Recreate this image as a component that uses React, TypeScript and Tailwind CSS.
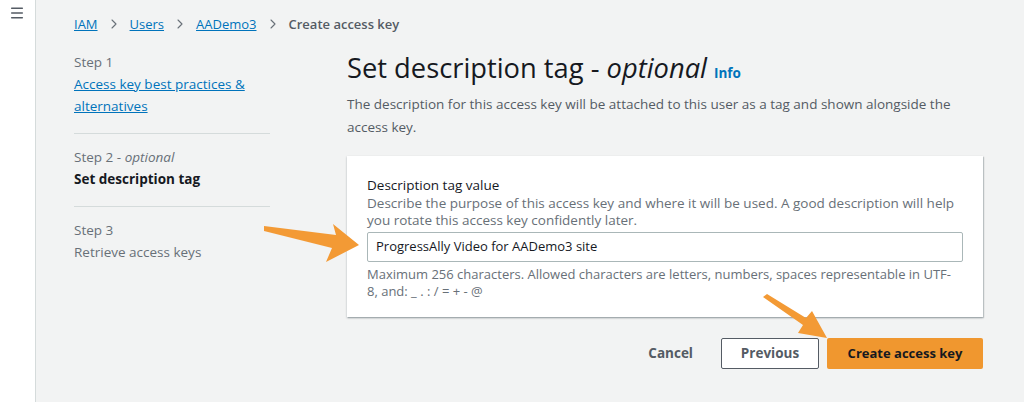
import { ChevronRight, Menu } from 'lucide-react';

const font = { fontFamily: '"Open Sans", "Liberation Sans", sans-serif' };

const Arrows = () => (
  <svg
    className="pointer-events-none absolute left-0 top-0"
    width="1024"
    height="402"
    viewBox="0 0 1024 402"
  >
    <polygon
      fill="#f39a35"
      points="264,226 336,235 333,224 359,245 326,262 332,248 264,231"
    />
    <polygon
      fill="#f39a35"
      points="763,297 767,294 806,318 812,311 827,338 798,333 803,325"
    />
  </svg>
);

const Sep = () => <ChevronRight size={16} strokeWidth={1.6} className="text-[#687078]" />;

const App = () => {
  return (
    <div
      className="relative flex h-[402px] w-[1024px] overflow-hidden bg-[#f2f3f3] text-[14px] text-[#16191f]"
      style={font}
    >
      {/* side nav toggle */}
      <div className="w-[36px] shrink-0 border-r border-[#d5dbdb] bg-white pt-[5px] pl-[9px] text-[#545b64]">
        <Menu size={16} strokeWidth={2.2} />
      </div>

      <div className="flex-1 pl-[38px] pt-[13px]">
        {/* breadcrumb */}
        <div className="flex items-center gap-[8px] text-[13px] leading-[22px]">
          <a className="text-[#0073bb] underline">IAM</a>
          <Sep />
          <a className="text-[#0073bb] underline">Users</a>
          <Sep />
          <a className="text-[#0073bb] underline">AADemo3</a>
          <Sep />
          <span className="font-semibold text-[#545b64]">Create access key</span>
        </div>

        <div className="mt-[16px] flex">
          {/* wizard steps */}
          <nav className="w-[196px] shrink-0 text-[13.5px] leading-[22px]">
            <div className="pb-[16px]">
              <div className="text-[#687078]">Step 1</div>
              <a className="text-[#0073bb] underline">
                Access key best practices &amp; alternatives
              </a>
            </div>
            <div className="border-t border-[#d5dbdb] pt-[12px] pb-[16px]">
              <div className="text-[#687078]">
                Step 2 - <i>optional</i>
              </div>
              <div className="font-bold text-[#16191f]">Set description tag</div>
            </div>
            <div className="border-t border-[#d5dbdb] pt-[12px]">
              <div className="text-[#687078]">Step 3</div>
              <div className="text-[#687078]">Retrieve access keys</div>
            </div>
          </nav>

          {/* main form */}
          <main className="ml-[77px] w-[636px]">
            <h1 className="flex items-baseline text-[27.3px] leading-[34px] text-[#16191f]">
              Set description tag -&nbsp;<i>optional</i>
              <span className="ml-[7px] text-[13.5px] font-bold text-[#0073bb]">Info</span>
            </h1>
            <p className="mt-[3px] w-[610px] text-[13.5px] leading-[23px] text-[#545b64]">
              The description for this access key will be attached to this user as a tag and
              shown alongside the access key.
            </p>

            <section className="mt-[17px] bg-white px-[20px] pt-[20px] pb-[17px] shadow-[0_1px_2px_rgba(0,28,36,0.3),1px_1px_1px_rgba(0,28,36,0.15)]">
              <label className="block text-[13.5px] leading-[18px] text-[#16191f]">
                Description tag value
              </label>
              <p className="mt-[1px] text-[13.5px] leading-[17px] text-[#687078]">
                Describe the purpose of this access key and where it will be used. A good
                description will help you rotate this access key confidently later.
              </p>
              <div className="mt-[3px] flex h-[30px] items-center rounded-[2px] border border-[#aab7b8] px-[8px] text-[13px] text-[#16191f]">
                ProgressAlly Video for AADemo3 site
              </div>
              <p className="mt-[4px] w-[590px] text-[13px] leading-[17px] text-[#687078]">
                Maximum 256 characters. Allowed characters are letters, numbers, spaces
                representable in UTF-<wbr />8, and: _ . : / = + - @
              </p>
            </section>

            <div className="mt-[21px] flex items-center justify-end gap-[8px] text-[13.5px] font-bold">
              <button className="mr-[20px] text-[#545b64]">Cancel</button>
              <button className="h-[31px] w-[98px] rounded-[2px] border border-[#545b64] bg-white text-[#545b64]">
                Previous
              </button>
              <button className="h-[31px] w-[156px] rounded-[2px] bg-[#f0972f] text-[13px] text-[#16191f]">
                Create access key
              </button>
            </div>
          </main>
        </div>
      </div>

      <Arrows />
    </div>
  );
};

export default App;
